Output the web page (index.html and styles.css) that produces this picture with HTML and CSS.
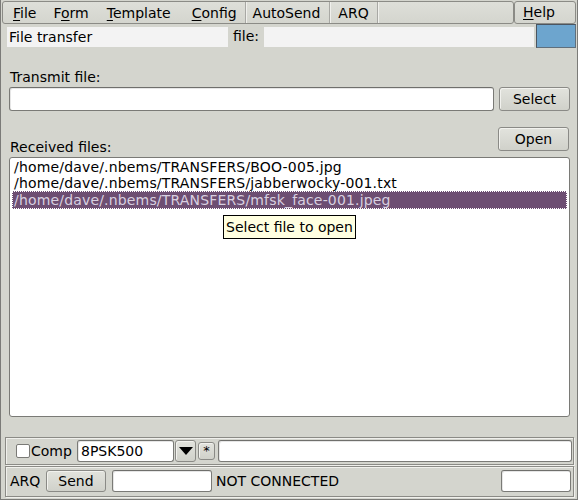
FILE: index.html
```html
<!DOCTYPE html>
<html>
<head>
<meta charset="utf-8">
<link rel="stylesheet" href="styles.css">
</head>
<body>
<div class="window">
  <div class="menubar">
    <div class="menu">
      <span class="mi mi-file"><u>F</u>ile</span>
      <span class="mi mi-form">F<u>o</u>rm</span>
      <span class="mi mi-tpl"><u>T</u>emplate</span>
      <span class="mi mi-cfg"><u>C</u>onfig</span>
      <span class="sep sep1"></span>
      <span class="mi mi-auto">AutoSend</span>
      <span class="sep sep2"></span>
      <span class="mi mi-arq">ARQ</span>
      <span class="sep sep3"></span>
    </div>
    <div class="help"><u>H</u>elp</div>
  </div>

  <div class="titlerow">
    <div class="flat title">File transfer</div>
    <span class="filelabel">file:</span>
    <div class="flat filefield"></div>
    <div class="bluebox"></div>
  </div>

  <div class="label lbl-transmit">Transmit file:</div>
  <div class="row row-transmit">
    <div class="input txinput"></div>
    <div class="btn btn-select">Select</div>
  </div>

  <div class="row row-received">
    <div class="label">Received files:</div>
    <div class="btn btn-open">Open</div>
  </div>

  <div class="list">
    <div class="item">/home/dave/.nbems/TRANSFERS/BOO-005.jpg</div>
    <div class="item">/home/dave/.nbems/TRANSFERS/jabberwocky-001.txt</div>
    <div class="item sel">/home/dave/.nbems/TRANSFERS/mfsk_face-001.jpeg</div>
    <div class="tooltip">Select file to open</div>
  </div>

  <div class="group group-mode">
    <span class="check"></span>
    <span class="comp">Comp</span>
    <div class="input modeinput">8PSK500</div>
    <div class="btn dropbtn"><svg width="14" height="10" viewBox="0 0 14 10"><polygon points="0,1 14,1 7,9" fill="#000"/></svg></div>
    <div class="btn starbtn">*</div>
    <div class="input wideinput"></div>
  </div>

  <div class="group group-arq">
    <span class="arq">ARQ</span>
    <div class="btn btn-send">Send</div>
    <div class="input arqinput"></div>
    <span class="status">NOT CONNECTED</span>
    <div class="input smallinput"></div>
  </div>
</div>
</body>
</html>
```

FILE: styles.css
```css
* { box-sizing: border-box; }
html, body { margin: 0; padding: 0; }
body {
  width: 578px;
  height: 500px;
  background: #d4d5ce;
  font-family: "DejaVu Sans", sans-serif;
  font-size: 14px;
  color: #000;
  overflow: hidden;
}
.window {
  width: 578px;
  height: 500px;
  border-left: 1px solid #7b7b78;
  border-right: 1px solid #7b7b78;
  border-bottom: 1px solid #7b7b78;
  position: relative;
}
.menubar {
  display: flex;
  height: 24px;
  padding: 1px 1px 0 1px;
}
.menu {
  width: 512px;
  height: 23px;
  border: 1px solid #8b8b86;
  border-radius: 3px;
  background: linear-gradient(#dedfd9, #d4d5ce);
  display: flex;
  align-items: center;
  line-height: 20px;
}
.mi { display: inline-block; }
.mi-file { margin-left: 10px; }
.mi-form { margin-left: 17px; }
.mi-tpl { margin-left: 18px; }
.mi-cfg { margin-left: 21px; }
.mi-auto { margin-left: 6px; }
.mi-arq { margin-left: 7px; }
.sep {
  width: 2px;
  height: 21px;
  border-left: 1px solid #a8a8a4;
  border-right: 1px solid #f0f0ec;
}
.sep1 { margin-left: 8px; }
.sep2 { margin-left: 9px; }
.sep3 { margin-left: 8px; }
.help {
  width: 62px;
  height: 23px;
  border: 1px solid #8b8b86;
  border-radius: 3px;
  background: linear-gradient(#dedfd9, #d4d5ce);
  padding-left: 8px;
  line-height: 21px;
}
u { text-decoration-thickness: 1px; text-underline-offset: 2px; }

.titlerow {
  display: flex;
  align-items: center;
  height: 24px;
  padding-left: 6px;
}
.flat {
  background: #f3f3f3;
  height: 20px;
  line-height: 20px;
}
.title { width: 221px; padding-left: 2px; margin-top: 1px; }
.filelabel { margin-left: 5px; width: 31px; }
.filefield { width: 270px; margin-top: 1px; }
.bluebox {
  width: 40px;
  height: 24px;
  margin-left: 2px;
  background: #6da5ce;
  border: 1px solid #5f6f7c;
  border-top-color: #4b5560;
  border-left-color: #4b5560;
}

.label { line-height: 17px; }
.lbl-transmit { margin: 21px 0 0 9px; }
.row { display: flex; align-items: center; }
.row-transmit { margin-top: 1px; padding-left: 8px; height: 24px; }
.input {
  background: #fff;
  border: 1px solid #7a7a76;
  border-top-color: #6f6f6c;
  border-radius: 3px;
  box-shadow: inset 1px 1px 0 #e6e6e6;
}
.txinput { width: 485px; height: 24px; }
.btn {
  border: 1px solid #8a8a86;
  border-radius: 3px;
  background: linear-gradient(#e2e3dd, #d0d1ca);
  text-align: center;
  box-shadow: inset 1px 1px 0 #f2f2ee;
}
.btn-select { width: 71px; height: 24px; margin-left: 5px; line-height: 22px; }
.row-received { margin-top: 16px; height: 24px; justify-content: space-between; padding: 0 8px 0 9px; align-items: flex-end; }
.row-received .label { margin-bottom: -5px; }
.btn-open { width: 71px; height: 24px; line-height: 22px; }

.list {
  position: relative;
  margin: 6px 0 0 8px;
  width: 561px;
  height: 260px;
  background: #fff;
  border: 1px solid #7a7a76;
  border-radius: 3px;
  padding: 1px 2px 0 2px;
}
.item { height: 16px; line-height: 16px; padding-left: 2px; white-space: nowrap; letter-spacing: 0.17px; }
.item.sel {
  background: #6d4e72;
  color: #d8d0e0;
  height: 18px;
  line-height: 18px;
  outline: 1px dotted #fff;
  outline-offset: -1px;
}
.tooltip {
  position: absolute;
  left: 213px;
  top: 57px;
  background: #ffffe1;
  border: 1px solid #000;
  padding: 0 2px;
  height: 24px;
  line-height: 22px;
  white-space: nowrap;
}

.group {
  display: flex;
  align-items: center;
  margin-left: 4px;
  width: 569px;
  border: 1px solid #8b8b86;
  box-shadow: inset 1px 1px 0 #f0f0ec, 1px 1px 0 #f0f0ec;
}
.group-mode { margin-top: 20px; height: 28px; padding-left: 10px; }
.check {
  width: 14px; height: 14px;
  background: #fff;
  border: 1px solid #7a7a76;
  border-radius: 2px;
}
.comp { margin-left: 1px; width: 46px; }
.modeinput { width: 97px; height: 22px; line-height: 20px; padding-left: 3px; }
.dropbtn { width: 21px; height: 22px; margin-left: 1px; display: flex; align-items: center; justify-content: center; }
.starbtn { width: 17px; height: 18px; margin-left: 2px; line-height: 16px; font-size: 13px; }
.wideinput { width: 354px; height: 22px; margin-left: 3px; }

.group-arq { margin-top: 1px; height: 31px; padding-left: 4px; align-items: flex-start; padding-top: 3px; }
.arq { width: 36px; line-height: 22px; }
.btn-send { width: 60px; height: 22px; line-height: 20px; }
.arqinput { width: 100px; height: 22px; margin-left: 6px; }
.status { margin-left: 4px; width: 285px; line-height: 22px; }
.smallinput { width: 70px; height: 22px; }
```
